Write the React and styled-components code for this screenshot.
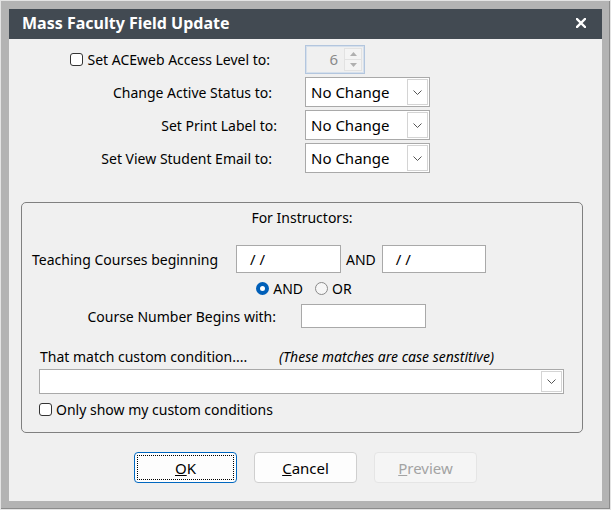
import styled, { createGlobalStyle } from "styled-components";

const GlobalStyle = createGlobalStyle`
  html, body {
    margin: 0;
    padding: 0;
    background: #ffffff;
  }
  body {
    font-family: "Noto Sans", "Liberation Sans", sans-serif;
    font-size: 14px;
    color: #000;
  }
  * {
    box-sizing: border-box;
  }
`;

const Frame = styled.div`
  width: 611px;
  height: 510px;
  background: #b3b3b3;
  border: 1px solid #e4e4e4;
  box-shadow: inset -1px -1px 0 #8c8c8c;
  padding: 8px 8px 7px 8px;
`;

const Dialog = styled.div`
  width: 593px;
  height: 492px;
  background: #f0f0f0;
  display: flex;
  flex-direction: column;
`;

const TitleBar = styled.div`
  height: 30px;
  flex: none;
  background: #424a52;
  color: #fff;
  display: flex;
  align-items: center;
  justify-content: space-between;
  padding: 0 16px 2px 13px;
  font-weight: 700;
  font-size: 16px;
`;

const CloseIcon = () => (
  <svg width="10" height="10" viewBox="0 0 10 10">
    <path d="M1 1 L9 9 M9 1 L1 9" stroke="#fff" strokeWidth="2.4" strokeLinecap="square" />
  </svg>
);

const Body = styled.div`
  padding-top: 6px;
  display: flex;
  flex-direction: column;
`;

const TopGrid = styled.div`
  display: grid;
  grid-template-columns: 263px auto;
  column-gap: 33px;
  row-gap: 3px;
  align-items: center;
`;

const RowLabel = styled.label`
  display: flex;
  align-items: center;
  justify-content: flex-end;
  gap: 4px;
  white-space: nowrap;
  margin-right: ${(p) => p.$shift || 0}px;
`;

const CheckBox = styled.span`
  display: inline-block;
  width: 13px;
  height: 13px;
  border: 1px solid #333;
  border-radius: 3px;
  background: #fff;
  flex: none;
`;

const Spinner = styled.div`
  width: 60px;
  height: 29px;
  border: 1px solid #b3c6de;
  box-shadow: inset 0 0 0 1px #d6e0ec;
  background: #f0f0f0;
  display: flex;
  align-items: stretch;
  padding: 2px;
`;

const SpinValue = styled.div`
  flex: 1;
  text-align: right;
  padding-right: 6px;
  color: #8a8a8a;
  font-size: 15px;
  line-height: 23px;
`;

const SpinButtons = styled.div`
  width: 18px;
  display: flex;
  flex-direction: column;
  border: 1px solid #e2e2e2;
  background: #f4f4f4;
`;

const SpinArrow = styled.div`
  flex: 1;
  display: flex;
  align-items: center;
  justify-content: center;
  & + & {
    border-top: 1px solid #e2e2e2;
  }
`;

const Select = styled.div`
  width: ${(p) => p.$width || 125}px;
  height: ${(p) => p.$height || 30}px;
  border: 1px solid #a9a9a9;
  background: #fff;
  display: flex;
  align-items: stretch;
  padding: 1px;
`;

const SelectText = styled.div`
  flex: 1;
  padding-left: 4px;
  display: flex;
  align-items: center;
  font-size: 15px;
`;

const DropButton = styled.div`
  width: 21px;
  border: 1px solid #d4d4d4;
  display: flex;
  align-items: center;
  justify-content: center;
  background: #fff;
`;

const Chevron = () => (
  <svg width="9" height="5" viewBox="0 0 9 5">
    <path d="M0.5 0.5 L4.5 4.5 L8.5 0.5" fill="none" stroke="#555" strokeWidth="1" />
  </svg>
);

const Triangle = ({ up }) => (
  <svg width="7" height="4" viewBox="0 0 7 4">
    <path d={up ? "M0 4 L3.5 0 L7 4 Z" : "M0 0 L3.5 4 L7 0 Z"} fill="#b0b0b0" />
  </svg>
);

const Group = styled.fieldset`
  margin: 29px 0 0 12px;
  width: 562px;
  height: 231px;
  border: 1px solid #808080;
  border-radius: 5px;
  padding: 5px 10px 0 10px;
  display: flex;
  flex-direction: column;
  min-width: 0;
`;

const GroupTitle = styled.div`
  text-align: center;
  line-height: 20px;
`;

const DateRow = styled.div`
  display: flex;
  align-items: center;
  margin-top: 17px;
`;

const DateLabel = styled.span`
  width: 204px;
`;

const TextBox = styled.div`
  width: ${(p) => p.$width}px;
  height: ${(p) => p.$height || 28}px;
  border: 1px solid #a9a9a9;
  background: #fff;
  padding-left: 13px;
  display: flex;
  align-items: center;
  font-size: 15px;
  white-space: pre;
`;

const AndText = styled.span`
  margin: 0 6px 0 5px;
`;

const RadioRow = styled.div`
  display: flex;
  align-items: center;
  justify-content: center;
  height: 18px;
  margin-top: 6px;
  padding-left: 4px;
`;

const RadioOption = styled.label`
  display: flex;
  align-items: center;
  gap: 4px;
  & + & {
    margin-left: 12px;
  }
`;

const Radio = styled.span`
  width: 13px;
  height: 13px;
  border-radius: 50%;
  flex: none;
  background: ${(p) => (p.$checked ? "#fff" : "#f6f6f6")};
  border: ${(p) => (p.$checked ? "4px solid #005fb8" : "1px solid #8a8a8a")};
`;

const CourseRow = styled.div`
  display: flex;
  align-items: center;
  margin-top: 7px;
`;

const CourseLabel = styled.span`
  width: 244px;
  text-align: right;
  margin-right: 25px;
`;

const ConditionHeader = styled.div`
  display: flex;
  align-items: center;
  margin-top: 19px;
  padding-left: 8px;
  line-height: 20px;
`;

const ConditionLabel = styled.span`
  width: 239px;
`;

const Hint = styled.span`
  font-style: italic;
  font-size: 14px;
`;

const ComboWrap = styled.div`
  margin: 2px 0 0 7px;
`;

const CheckRow = styled.label`
  display: flex;
  align-items: center;
  gap: 4px;
  margin: 6px 0 0 7px;
`;

const ButtonRow = styled.div`
  display: flex;
  justify-content: center;
  gap: 17px;
  margin-top: 19px;
`;

const Button = styled.button`
  width: 103px;
  height: 31px;
  font-family: inherit;
  font-size: 15px;
  border-radius: 4px;
  background: ${(p) => (p.$disabled ? "#f5f5f5" : "#fdfdfd")};
  color: ${(p) => (p.$disabled ? "#a3a3a3" : "#000")};
  border: 1px solid
    ${(p) => (p.$primary ? "#0067c0" : p.$disabled ? "#e5e5e5" : "#cfcfcf")};
  outline: ${(p) => (p.$primary ? "1px dotted #000" : "none")};
  outline-offset: -4px;
  padding: 0;
`;

export default function App() {
  return (
    <>
      <GlobalStyle />
      <Frame>
        <Dialog>
          <TitleBar>
            <span>Mass Faculty Field Update</span>
            <CloseIcon />
          </TitleBar>
          <Body>
            <TopGrid>
              <RowLabel $shift={2}>
                <CheckBox />
                Set ACEweb Access Level to:
              </RowLabel>
              <Spinner>
                <SpinValue>6</SpinValue>
                <SpinButtons>
                  <SpinArrow>
                    <Triangle up />
                  </SpinArrow>
                  <SpinArrow>
                    <Triangle />
                  </SpinArrow>
                </SpinButtons>
              </Spinner>

              <RowLabel>Change Active Status to:</RowLabel>
              <Select>
                <SelectText>No Change</SelectText>
                <DropButton>
                  <Chevron />
                </DropButton>
              </Select>

              <RowLabel $shift={-5}>Set Print Label to:</RowLabel>
              <Select>
                <SelectText>No Change</SelectText>
                <DropButton>
                  <Chevron />
                </DropButton>
              </Select>

              <RowLabel>Set View Student Email to:</RowLabel>
              <Select>
                <SelectText>No Change</SelectText>
                <DropButton>
                  <Chevron />
                </DropButton>
              </Select>
            </TopGrid>

            <Group>
              <GroupTitle>For Instructors:</GroupTitle>
              <DateRow>
                <DateLabel>Teaching Courses beginning</DateLabel>
                <TextBox $width={105}>/ /</TextBox>
                <AndText>AND</AndText>
                <TextBox $width={104}>/ /</TextBox>
              </DateRow>
              <RadioRow>
                <RadioOption>
                  <Radio $checked />
                  AND
                </RadioOption>
                <RadioOption>
                  <Radio />
                  OR
                </RadioOption>
              </RadioRow>
              <CourseRow>
                <CourseLabel>Course Number Begins with:</CourseLabel>
                <TextBox $width={125} $height={24} />
              </CourseRow>
              <ConditionHeader>
                <ConditionLabel>That match custom condition....</ConditionLabel>
                <Hint>(These matches are case senstitive)</Hint>
              </ConditionHeader>
              <ComboWrap>
                <Select $width={525} $height={25}>
                  <SelectText />
                  <DropButton>
                    <Chevron />
                  </DropButton>
                </Select>
              </ComboWrap>
              <CheckRow>
                <CheckBox />
                Only show my custom conditions
              </CheckRow>
            </Group>

            <ButtonRow>
              <Button $primary>
                <u>O</u>K
              </Button>
              <Button>
                <u>C</u>ancel
              </Button>
              <Button $disabled>
                <u>P</u>review
              </Button>
            </ButtonRow>
          </Body>
        </Dialog>
      </Frame>
    </>
  );
}
